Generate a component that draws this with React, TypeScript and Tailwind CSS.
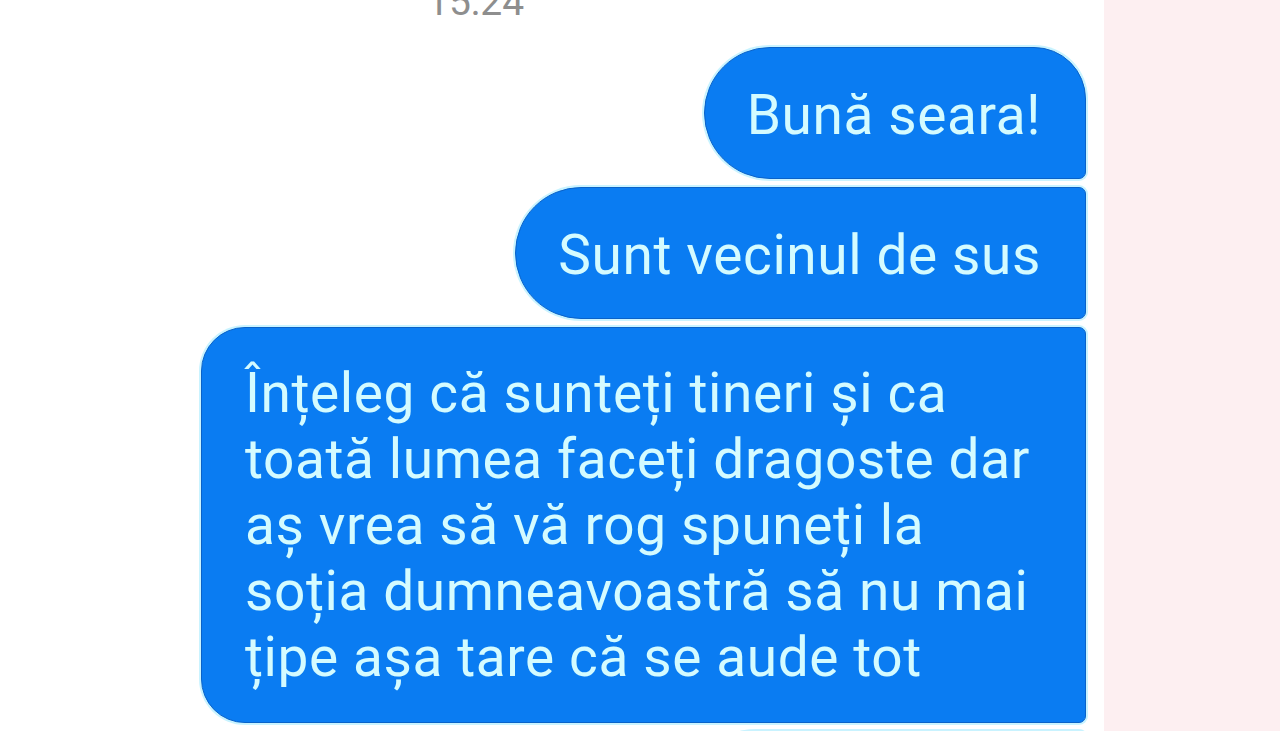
import React from "react";

const bubbleBase =
  "bg-[#0a7cf2] text-[#d4fbff] border border-[#0a62c8] shadow-[0_0_0_2px_#c9f3ff] py-[32px] text-[55px] leading-[66px] tracking-[0.6px] whitespace-nowrap";

export default function App() {
  return (
    <div
      className="flex h-[731px] w-[1280px] overflow-hidden bg-white"
      style={{ fontFamily: "Roboto, 'Noto Sans', sans-serif" }}
    >
      <div className="flex w-[1104px] flex-col items-end pr-[18px]">
        <div className="-mt-[16px] mb-[27px] w-full pl-[427px] text-[39px] leading-[36px] text-[#8e8e8e]">
          15:24
        </div>
        <div className="flex flex-col items-end gap-[8px]">
          <div className={`${bubbleBase} pl-[42px] pr-[44px] pt-[34px] pb-[30px] rounded-tl-[66px] rounded-bl-[66px] rounded-tr-[52px] rounded-br-[7px]`}>
            Bună seara!
          </div>
          <div className={`${bubbleBase} pl-[42px] pr-[44px] pt-[34px] pb-[30px] rounded-tl-[66px] rounded-bl-[66px] rounded-tr-[7px] rounded-br-[7px]`}>
            Sunt vecinul de sus
          </div>
          <div className={`${bubbleBase} pl-[43px] pr-[55px] rounded-tl-[44px] rounded-bl-[44px] rounded-tr-[7px] rounded-br-[7px]`}>
            Înțeleg că sunteți tineri și ca
            <br />
            toată lumea faceți dragoste dar
            <br />
            aș vrea să vă rog spuneți la
            <br />
            soția dumneavoastră să nu mai
            <br />
            țipe așa tare că se aude tot
          </div>
          <div className={`${bubbleBase} px-[43px] w-[396px] rounded-tl-[66px] rounded-tr-[7px]`}>
            &nbsp;
          </div>
        </div>
      </div>
      <div className="flex-1 bg-[#fdeff1]" />
    </div>
  );
}
